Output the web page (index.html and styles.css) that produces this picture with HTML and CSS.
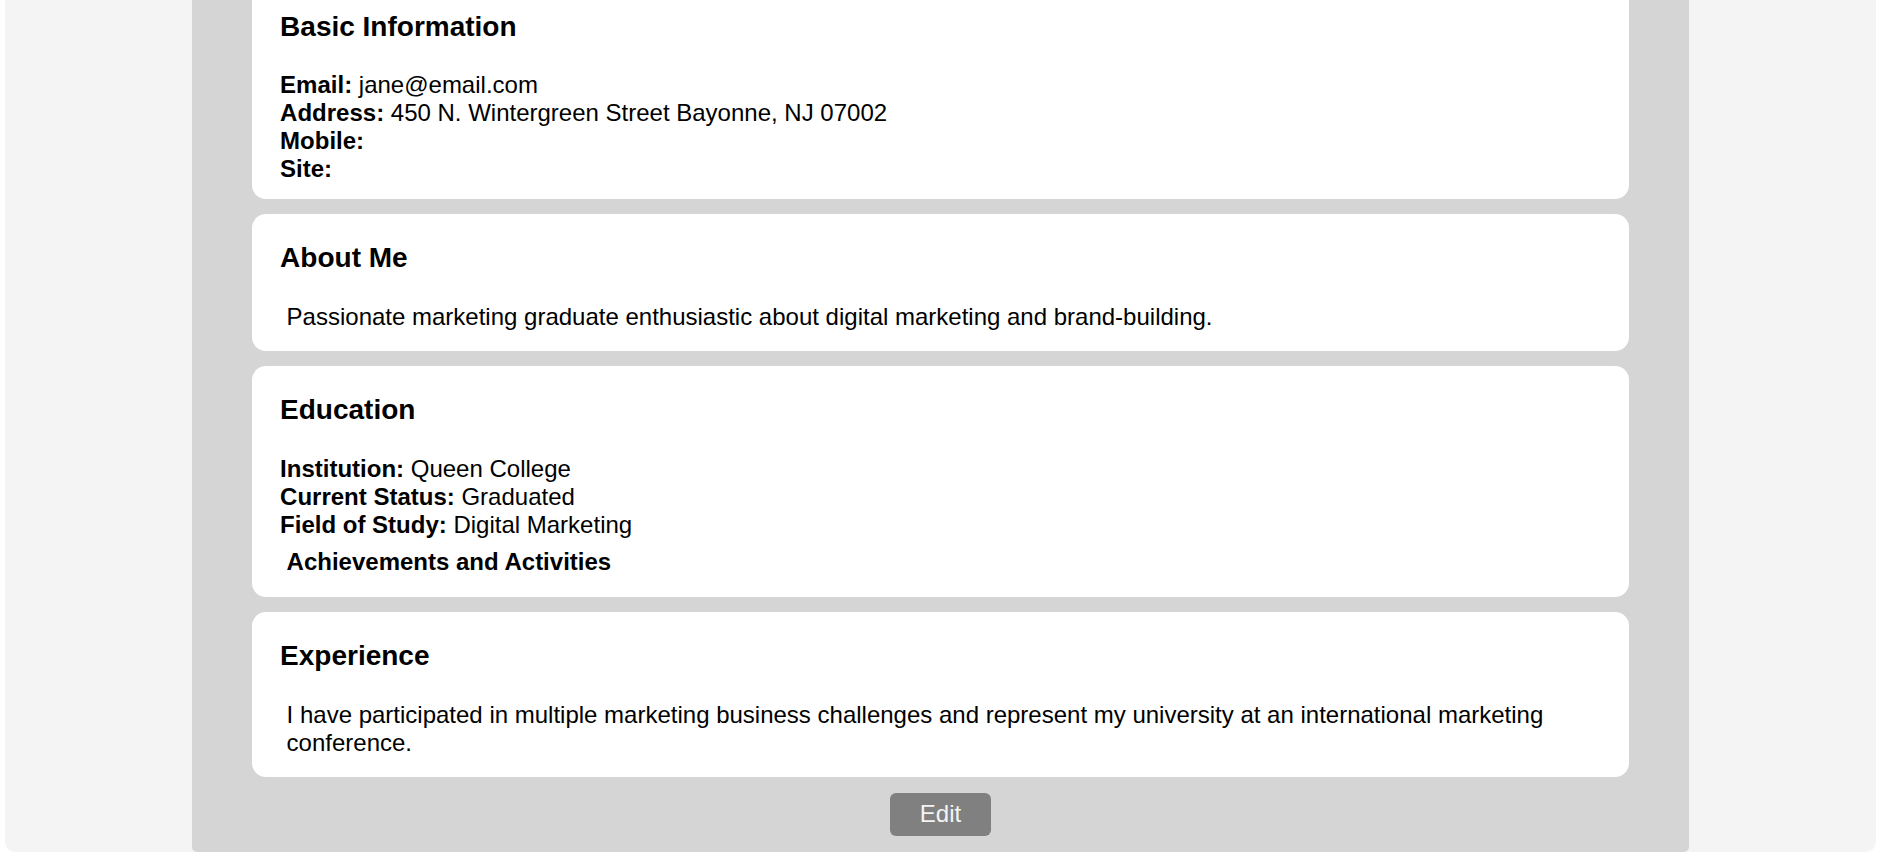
FILE: index.html
```html
<!DOCTYPE html>
<html lang="en">
<head>
<meta charset="utf-8">
<title>Profile</title>
<link rel="stylesheet" href="styles.css">
</head>
<body>
<div class="page">
  <div class="sheet">
    <section class="card card--compact">
      <h2 class="card-title">Basic Information</h2>
      <div class="field"><b>Email:</b> jane@email.com</div>
      <div class="field"><b>Address:</b> 450 N. Wintergreen Street Bayonne, NJ 07002</div>
      <div class="field"><b>Mobile:</b> </div>
      <div class="field"><b>Site:</b> </div>
    </section>
    <section class="card">
      <h2 class="card-title">About Me</h2>
      <p class="text">Passionate marketing graduate enthusiastic about digital marketing and brand-building.</p>
    </section>
    <section class="card card--edu">
      <h2 class="card-title">Education</h2>
      <div class="field"><b>Institution:</b> Queen College</div>
      <div class="field"><b>Current Status:</b> Graduated</div>
      <div class="field"><b>Field of Study:</b> Digital Marketing</div>
      <h4 class="subtitle">Achievements and Activities</h4>
    </section>
    <section class="card">
      <h2 class="card-title">Experience</h2>
      <p class="text">I have participated in multiple marketing business challenges and represent my university at an international marketing conference.</p>
    </section>
    <div class="actions">
      <button class="edit-btn" type="button">Edit</button>
    </div>
  </div>
</div>
</body>
</html>
```
FILE: styles.css
```css
html, body {
  margin: 0;
  padding: 0;
  background: #ffffff;
}

body {
  font-family: "Liberation Sans", Arial, sans-serif;
  font-size: 24px;
  color: #000;
  overflow: hidden;
}

.page {
  background: #f4f4f4;
  margin: -17px 9px 10px 5px;
  border-radius: 0 0 10px 10px;
}

.sheet {
  width: 80%;
  margin: 0 auto;
  background: #d5d5d5;
  padding: 0 60px 16px;
  box-sizing: border-box;
  border-radius: 0 0 5px 5px;
  display: flex;
  flex-direction: column;
  gap: 15px;
}

.card {
  background: #ffffff;
  border-radius: 14px;
  padding: 28px 28px 20px;
}

.card-title {
  margin: 0 0 29px;
  font-size: 28px;
  font-weight: bold;
  line-height: normal;
}

.card--compact {
  padding-bottom: 16px;
}

.card--compact .card-title {
  margin-bottom: 28px;
}

.card--edu {
  padding-bottom: 21px;
}

.field {
  line-height: normal;
}

.field b {
  font-weight: bold;
}

.text {
  margin: 0;
  padding-left: 6.5px;
  line-height: normal;
}

.subtitle {
  margin: 8.5px 0 0;
  padding-left: 6.5px;
  font-size: 24px;
  font-weight: bold;
  line-height: normal;
}

.actions {
  display: flex;
  justify-content: center;
  margin-top: 1px;
}

.edit-btn {
  width: 101px;
  height: 43px;
  background: #808080;
  color: #f4f4f4;
  border: none;
  border-radius: 6px;
  font-family: "Liberation Sans", Arial, sans-serif;
  font-size: 24px;
  padding: 0;
}
```
